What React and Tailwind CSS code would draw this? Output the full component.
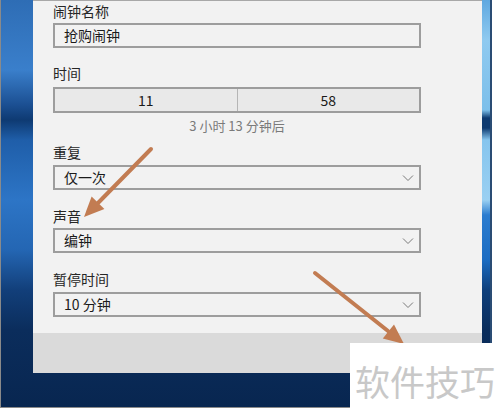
import React from "react";

const Chevron = () => (
  <svg width="12" height="8" viewBox="0 0 12 8" className="mr-[5px]">
    <path d="M1 1.5 L6 6.5 L11 1.5" fill="none" stroke="#7a7a7a" strokeWidth="1" />
  </svg>
);

const Label = ({ children, className = "" }) => (
  <div className={`h-[20px] leading-[20px] text-[14px] text-[#262626] ${className}`}>{children}</div>
);

const Select = ({ children, className = "" }) => (
  <div className={`h-[25px] w-[368px] border-2 border-[#9d9d9d] bg-[#f2f2f2] flex items-center justify-between pl-[9px] text-[14px] text-[#1a1a1a] ${className}`}>
    <span>{children}</span>
    <Chevron />
  </div>
);

export default function App() {
  return (
    <div
      className="relative w-[500px] h-[418px] bg-white overflow-hidden"
      style={{ fontFamily: '"Noto Sans CJK SC", "Noto Sans", sans-serif' }}
    >
      <div className="w-[492px] h-[408px] border-l border-b border-[#8a8a8a] flex bg-[linear-gradient(180deg,#2e6db5_0px,#3a7fcb_70px,#1b4f92_105px,#0e3a72_120px,#1f5ea9_140px,#2d75c6_200px,#2466b3_250px,#123f7a_290px,#0b2d5c_330px,#082650_408px)]">
        <div className="w-[32px] shrink-0" />
        <div className="w-[449px] h-[373px] shrink-0 bg-[#f2f2f2] border-t border-[#a8a8a8] flex flex-col">
          <div className="pl-[20px] flex flex-col">
            <Label>闹钟名称</Label>
            <div className="mt-[2px] h-[25px] w-[368px] border-2 border-[#9d9d9d] bg-[#f2f2f2] flex items-center pl-[9px] text-[14px] text-[#1a1a1a]">
              抢购闹钟
            </div>

            <Label className="mt-[15px]">时间</Label>
            <div className="mt-[4px] h-[26px] w-[368px] border-2 border-[#9d9d9d] bg-[#e9e9e9] flex text-[14px] text-[#1a1a1a]">
              <div className="flex-1 flex items-center justify-center border-r border-[#b5b5b5]">11</div>
              <div className="flex-1 flex items-center justify-center">58</div>
            </div>
            <div className="mt-[3px] w-[368px] h-[20px] leading-[20px] text-center text-[13px] text-[#7a7a7a]">
              3 小时 13 分钟后
            </div>

            <Label className="mt-[6px]">重复</Label>
            <Select className="mt-[3px]">仅一次</Select>

            <Label className="mt-[16px]">声音</Label>
            <Select className="mt-[2px]">编钟</Select>

            <Label className="mt-[16px]">暂停时间</Label>
            <Select className="mt-[3px]">10 分钟</Select>
          </div>
          <div className="mt-auto h-[40px] bg-[#dadada]" />
        </div>
        <div className="w-[8px] h-[408px] shrink-0 bg-[linear-gradient(180deg,#5fa8e0_0px,#8fcaf0_40px,#7cbfea_110px,#0e3a70_118px,#0e3a70_128px,#86c5ee_140px,#9ad0f2_200px,#2b7ccf_215px,#1b6cc2_260px,#0e3f7c_290px,#0a2d5c_330px,#082650_408px)]" />
        <div className="w-[2px] h-[408px] shrink-0 bg-[#2a4c74]" />
      </div>

      <svg className="absolute left-0 top-0 pointer-events-none" width="500" height="418" viewBox="0 0 500 418">
        <line x1="151" y1="149" x2="98" y2="203" stroke="#c27c52" strokeWidth="4" strokeLinecap="round" />
        <polygon points="84,217 104.4,209.1 91.6,196.5" fill="#c27c52" />
        <line x1="315" y1="273" x2="388" y2="331" stroke="#c27c52" strokeWidth="4" strokeLinecap="round" />
        <polygon points="404,344 382.8,338.5 394,324.5" fill="#c27c52" />
      </svg>

      <div className="absolute left-[350px] top-[343px] w-[150px] h-[75px] bg-white flex items-center pl-[5px]">
        <span className="text-[35px] leading-none text-[#c8c8c8] tracking-[0px]">软件技巧</span>
      </div>
    </div>
  );
}
